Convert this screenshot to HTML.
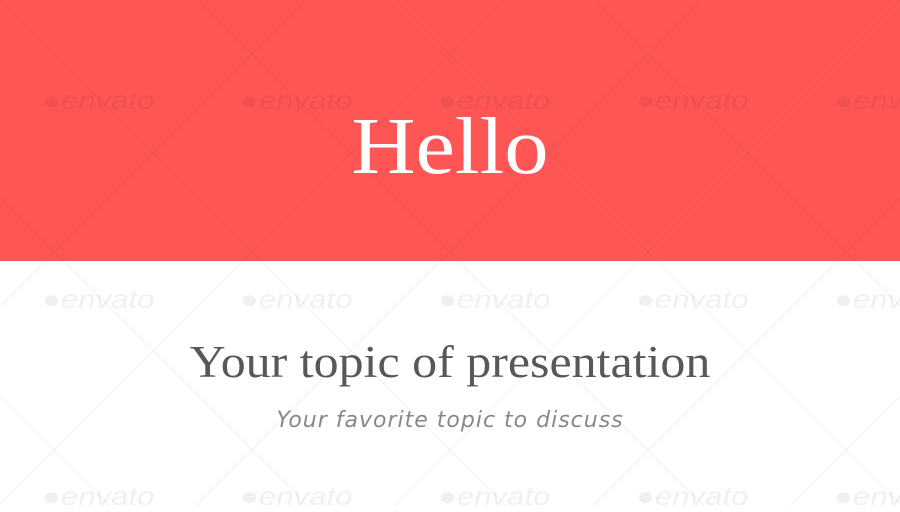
<!DOCTYPE html>
<html><head><style>
html,body{margin:0;padding:0;width:900px;height:506px;overflow:hidden;background:#fff;font-family:"Liberation Serif",serif}
.red{position:absolute;left:0;top:0;width:900px;height:261px;background:#fe5655}
.h{position:absolute;left:0;width:900px;text-align:center}
.wm{position:absolute;font-family:"Liberation Sans",sans-serif;font-style:italic;font-size:26px;letter-spacing:0px;transform:scaleX(1.2);transform-origin:left top}
.wm.r{color:rgba(0,0,0,0.06)}
.wm.w{color:rgba(0,0,0,0.06)}
</style></head><body>
<div class="red"></div>
<svg width="900" height="506" style="position:absolute;left:0;top:0">
<g stroke="rgba(0,0,0,0.05)" stroke-width="1">
<line x1="0" y1="0" x2="506" y2="506"/><line x1="198" y1="0" x2="704" y2="506"/><line x1="396" y1="0" x2="900" y2="504"/><line x1="594" y1="0" x2="900" y2="306"/><line x1="0" y1="198" x2="308" y2="506"/><line x1="0" y1="396" x2="110" y2="506"/>
<line x1="900" y1="0" x2="394" y2="506"/><line x1="702" y1="0" x2="196" y2="506"/><line x1="504" y1="0" x2="0" y2="504"/><line x1="306" y1="0" x2="0" y2="306"/><line x1="900" y1="198" x2="592" y2="506"/><line x1="900" y1="396" x2="790" y2="506"/>
</g></svg>
<div class="wm r" style="left:42px;top:85px">●envato</div>
<div class="wm r" style="left:240px;top:85px">●envato</div>
<div class="wm r" style="left:438px;top:85px">●envato</div>
<div class="wm r" style="left:636px;top:85px">●envato</div>
<div class="wm r" style="left:834px;top:85px">●envato</div>
<div class="wm w" style="left:42px;top:284px">●envato</div>
<div class="wm w" style="left:240px;top:284px">●envato</div>
<div class="wm w" style="left:438px;top:284px">●envato</div>
<div class="wm w" style="left:636px;top:284px">●envato</div>
<div class="wm w" style="left:834px;top:284px">●envato</div>
<div class="wm w" style="left:42px;top:481px">●envato</div>
<div class="wm w" style="left:240px;top:481px">●envato</div>
<div class="wm w" style="left:438px;top:481px">●envato</div>
<div class="wm w" style="left:636px;top:481px">●envato</div>
<div class="wm w" style="left:834px;top:481px">●envato</div>
<div class="h" style="top:101px;font-size:80px;color:#fff;line-height:92px;transform:scaleX(1.11)">Hello</div>
<div class="h" style="top:336px;font-size:45px;color:#58585a;line-height:52px;transform:scaleX(1.11)">Your topic of presentation</div>
<div class="h" style="top:406px;font-size:22px;color:#888;font-style:italic;font-family:'DejaVu Sans',sans-serif;font-weight:200;letter-spacing:1px;line-height:30px">Your favorite topic to discuss</div>
</body></html>
